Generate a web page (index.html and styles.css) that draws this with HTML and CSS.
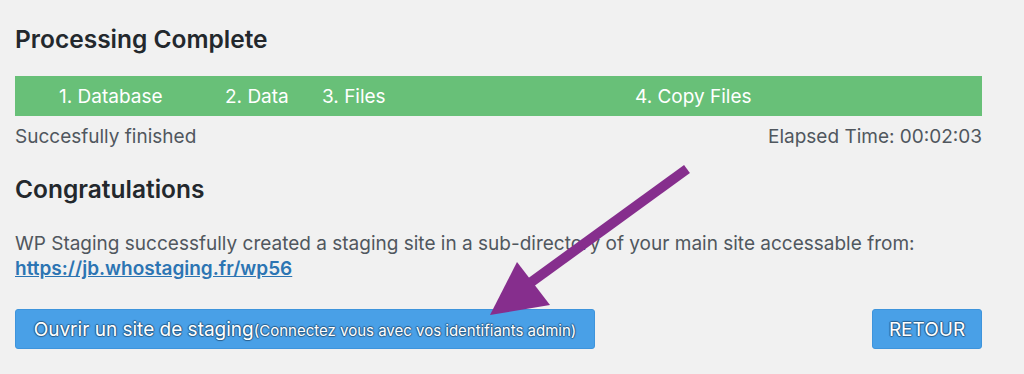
FILE: index.html
```html
<!DOCTYPE html>
<html lang="en">
<head>
<meta charset="utf-8">
<title>Processing Complete</title>
<link rel="stylesheet" href="styles.css">
</head>
<body>
<div class="page">
  <h2 class="title">Processing Complete</h2>
  <div class="progress">
    <span class="step step-db">1. Database</span>
    <span class="step step-data">2. Data</span>
    <span class="step step-files">3. Files</span>
    <span class="step step-copy">4. Copy Files</span>
  </div>
  <div class="status">
    <span>Succesfully finished</span>
    <span>Elapsed Time: 00:02:03</span>
  </div>
  <h2 class="title congrats">Congratulations</h2>
  <p class="message">WP Staging successfully created a staging site in a sub-directory of your main site accessable from:<br><a href="#">https://jb.whostaging.fr/wp56</a></p>
  <div class="actions">
    <a class="btn btn-open" href="#">Ouvrir un site de staging<small>(Connectez vous avec vos identifiants admin)</small></a>
    <a class="btn btn-back" href="#">RETOUR</a>
  </div>
</div>
<svg class="arrow" width="1024" height="374" viewBox="0 0 1024 374">
  <line x1="687" y1="169" x2="530" y2="283" stroke="#862e8d" stroke-width="10"/>
  <polygon points="490,315 517,262 550,305" fill="#862e8d"/>
</svg>
</body>
</html>
```
FILE: styles.css
```css
html, body {
  margin: 0;
  padding: 0;
  background: #f1f1f1;
}
body {
  font-family: Inter, "Noto Sans", sans-serif;
  color: #50575e;
  width: 1024px;
  height: 374px;
  overflow: hidden;
  position: relative;
}
.page {
  padding: 24px 42px 0 15px;
}
.title {
  margin: 0;
  font-size: 24.5px;
  font-weight: 600;
  color: #23282d;
  line-height: 30px;
}
.progress {
  margin-top: 22px;
  height: 40px;
  background: #68c078;
  display: flex;
  align-items: center;
  color: #fff;
  font-size: 19px;
}
.step-db { margin-left: 44px; width: 166px; }
.step-data { width: 97px; }
.step-files { width: 313px; }
.status {
  display: flex;
  justify-content: space-between;
  font-size: 19px;
  margin-top: 9px;
  line-height: 24px;
}
.congrats {
  margin-top: 25px;
}
.message {
  margin: 27px 0 0;
  font-size: 19px;
  line-height: 25px;
}
.message a {
  color: #2c75b3;
  font-weight: 600;
  text-decoration: underline;
}
.actions {
  display: flex;
  justify-content: space-between;
  margin-top: 28px;
}
.btn {
  display: flex;
  align-items: center;
  justify-content: center;
  box-sizing: border-box;
  height: 40px;
  background: #49a0e7;
  border: 1px solid #3e94dc;
  border-radius: 3px;
  color: #fff;
  text-decoration: none;
  font-size: 19px;
  text-shadow: 0 -1px 1px #2a5f8c, 1px 0 1px #2a5f8c, 0 1px 1px #2a5f8c, -1px 0 1px #2a5f8c;
}
.btn-open {
  width: 580px;
}
.btn-open small {
  font-size: 15px;
  padding-top: 2px;
}
.btn-back {
  width: 110px;
}
.arrow {
  position: absolute;
  left: 0;
  top: 0;
  pointer-events: none;
}
```
